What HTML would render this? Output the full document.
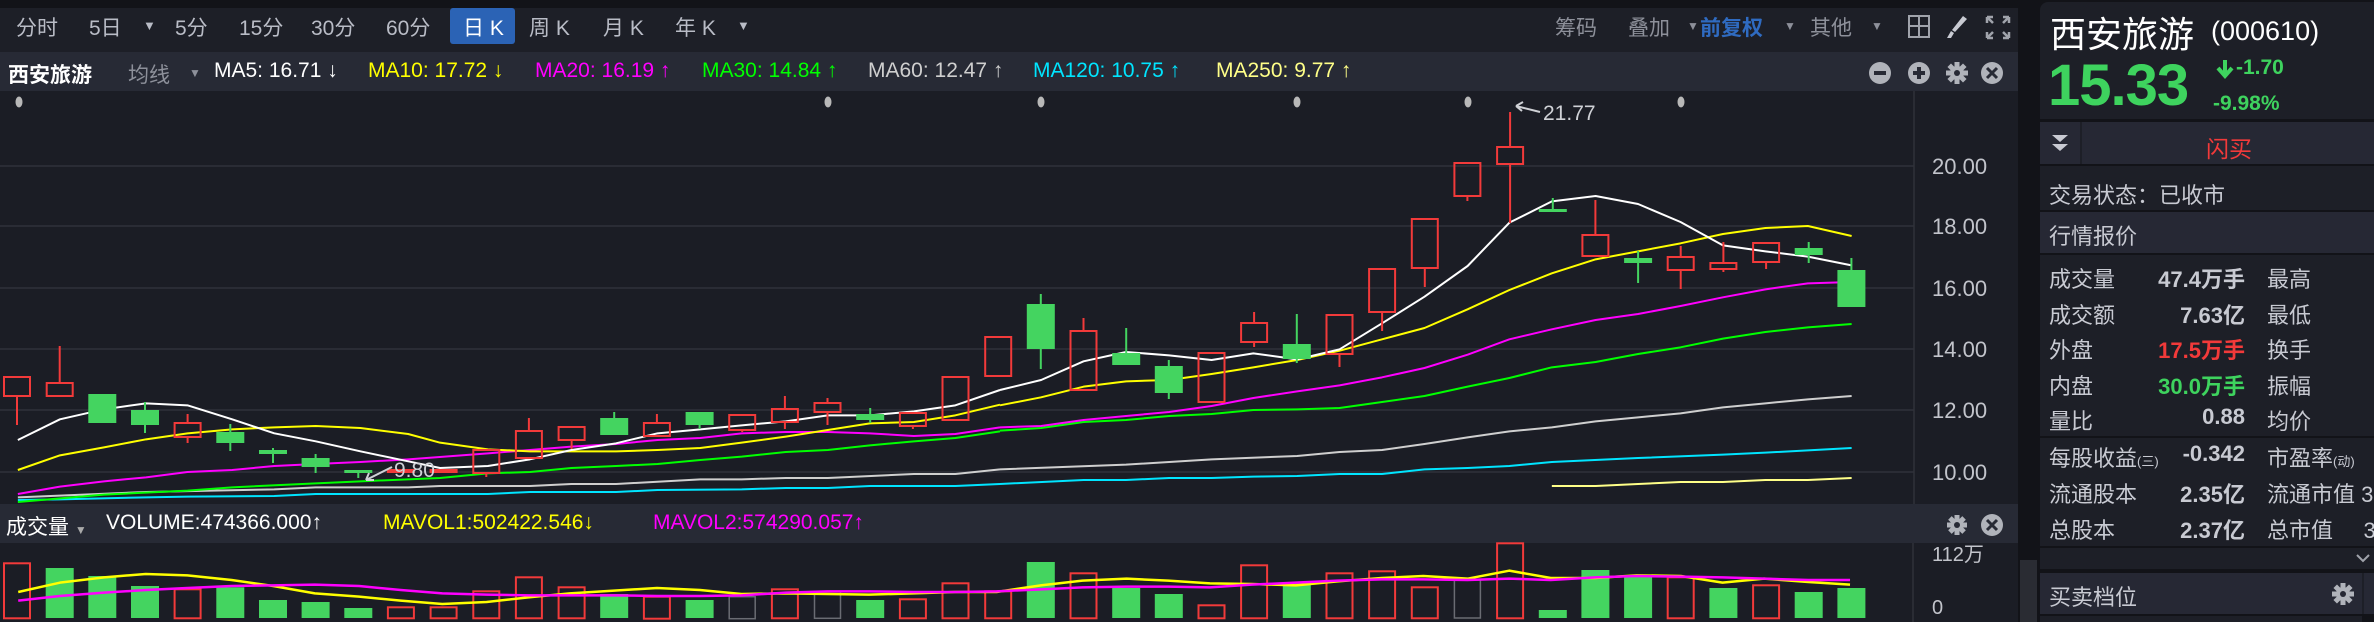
<!DOCTYPE html>
<html><head><meta charset="utf-8"><style>
*{margin:0;padding:0;box-sizing:border-box}
body{width:2374px;height:622px;background:#121318;overflow:hidden;position:relative;font-family:"Liberation Sans","Noto Sans CJK SC",sans-serif;}
.a{position:absolute;white-space:nowrap}
.tb{color:#b9bcc6;font-size:21px;top:12px}
.ma{font-size:21px;top:59px}
.rp{color:#c8cad2;font-size:22px}
.v{font-weight:bold;text-align:right;width:140px}
</style></head><body>
<!-- left main area -->
<div class="a" style="left:0;top:8px;width:2018px;height:44px;background:#1d1f27"></div>
<div class="a" style="left:0;top:52px;width:2018px;height:39px;background:#272a35"></div>
<div class="a" style="left:0;top:91px;width:2018px;height:413px;background:#1b1d25"></div>
<div class="a" style="left:0;top:504px;width:2018px;height:39px;background:#272a35"></div>
<div class="a" style="left:0;top:543px;width:2018px;height:79px;background:#1b1d25"></div>
<div class="a" style="left:2020px;top:560px;width:17px;height:62px;background:#2a2c33"></div>

<!-- toolbar -->
<div class="a tb" style="left:16px">分时</div>
<div class="a tb" style="left:89px">5日</div>
<div class="a tb" style="left:143px;font-size:13px;top:18px">▼</div>
<div class="a tb" style="left:175px">5分</div>
<div class="a tb" style="left:239px">15分</div>
<div class="a tb" style="left:311px">30分</div>
<div class="a tb" style="left:386px">60分</div>
<div class="a" style="left:450px;top:8px;width:65px;height:36px;background:#2b63b5;border-radius:3px"></div>
<div class="a tb" style="left:463px;color:#fff">日 K</div>
<div class="a tb" style="left:529px">周 K</div>
<div class="a tb" style="left:603px">月 K</div>
<div class="a tb" style="left:675px">年 K</div>
<div class="a tb" style="left:737px;font-size:13px;top:18px">▼</div>
<div class="a tb" style="left:1555px;color:#8d909a">筹码</div>
<div class="a tb" style="left:1628px;color:#8d909a">叠加</div>
<div class="a tb" style="left:1687px;font-size:12px;top:19px;color:#8d909a">▼</div>
<div class="a tb" style="left:1700px;color:#2f6bc1;font-weight:bold">前复权</div>
<div class="a tb" style="left:1784px;font-size:12px;top:19px;color:#8d909a">▼</div>
<div class="a tb" style="left:1810px;color:#8d909a">其他</div>
<div class="a tb" style="left:1871px;font-size:12px;top:19px;color:#8d909a">▼</div>
<svg class="a" style="left:1905px;top:14px" width="110" height="26">
<rect x="4" y="2" width="20" height="21" fill="none" stroke="#a0a3ab" stroke-width="2"/><line x1="14" y1="2" x2="14" y2="23" stroke="#a0a3ab" stroke-width="2"/><line x1="4" y1="12" x2="24" y2="12" stroke="#a0a3ab" stroke-width="2"/>
<path d="M58 2 L62 5 L50 18 L47 16 Z M46 17 L49 19 L46 24 L42 24 Z" fill="#c8cad2"/>
<path d="M82 3 h6 M82 3 v6 M82 3 l6 6 M104 3 h-6 M104 3 v6 M104 3 l-6 6 M82 24 h6 M82 24 v-6 M82 24 l6 -6 M104 24 h-6 M104 24 v-6 M104 24 l-6 -6" stroke="#a0a3ab" stroke-width="2.5" fill="none"/>
</svg>

<!-- MA row -->
<div class="a ma" style="left:8px;color:#fff;font-weight:bold">西安旅游</div>
<div class="a ma" style="left:128px;color:#8d909a">均线</div>
<div class="a ma" style="left:189px;font-size:12px;top:66px;color:#8d909a">▼</div>
<div class="a ma" style="left:214px;color:#fff">MA5: 16.71 ↓</div>
<div class="a ma" style="left:368px;color:#ffff00">MA10: 17.72 ↓</div>
<div class="a ma" style="left:535px;color:#ff00ff">MA20: 16.19 ↑</div>
<div class="a ma" style="left:702px;color:#00ff00">MA30: 14.84 ↑</div>
<div class="a ma" style="left:868px;color:#cfcfcf">MA60: 12.47 ↑</div>
<div class="a ma" style="left:1033px;color:#00e5ff">MA120: 10.75 ↑</div>
<div class="a ma" style="left:1216px;color:#ffff88">MA250: 9.77 ↑</div>
<svg class="a" style="left:1868px;top:60px" width="145" height="26">
<circle cx="12" cy="13" r="11" fill="#b0b3ba"/><rect x="6" y="11" width="12" height="4" fill="#272a35"/>
<circle cx="51" cy="13" r="11" fill="#b0b3ba"/><rect x="45" y="11" width="12" height="4" fill="#272a35"/><rect x="49" y="7" width="4" height="12" fill="#272a35"/>
<g transform="translate(89,13)"><circle r="7" fill="#b0b3ba"/><circle r="3" fill="#272a35"/><g fill="#b0b3ba"><rect x="-2.5" y="-11" width="5" height="22"/><rect x="-11" y="-2.5" width="22" height="5"/><rect x="-2.5" y="-11" width="5" height="22" transform="rotate(45)"/><rect x="-2.5" y="-11" width="5" height="22" transform="rotate(-45)"/></g><circle r="3" fill="#272a35"/></g>
<circle cx="124" cy="13" r="11" fill="#b0b3ba"/><path d="M119 8 L129 18 M129 8 L119 18" stroke="#272a35" stroke-width="3"/>
</svg>

<!-- chart -->
<svg class="a" style="left:0;top:0" width="2018" height="622">
<g stroke="#2a2c35" stroke-width="2">
<line x1="0" y1="166" x2="1914" y2="166"/><line x1="0" y1="226" x2="1914" y2="226"/><line x1="0" y1="288" x2="1914" y2="288"/><line x1="0" y1="349" x2="1914" y2="349"/><line x1="0" y1="410" x2="1914" y2="410"/><line x1="0" y1="472" x2="1914" y2="472"/>
</g>
<line x1="1914" y1="91" x2="1914" y2="504" stroke="#2f313a" stroke-width="1.5"/>
<line x1="1913" y1="543" x2="1913" y2="622" stroke="#2f313a" stroke-width="1.5"/>
<g fill="#b8b8b8"><ellipse cx="19" cy="102" rx="3.5" ry="5.5"/><ellipse cx="828" cy="102" rx="3.5" ry="5.5"/><ellipse cx="1041" cy="102" rx="3.5" ry="5.5"/><ellipse cx="1297" cy="102" rx="3.5" ry="5.5"/><ellipse cx="1468" cy="102" rx="3.5" ry="5.5"/><ellipse cx="1681" cy="102" rx="3.5" ry="5.5"/></g>
<g fill="#c2c4cb" font-size="22" font-family="Liberation Sans,sans-serif"><text x="1932" y="174">20.00</text><text x="1932" y="234">18.00</text><text x="1932" y="296">16.00</text><text x="1932" y="357">14.00</text><text x="1932" y="418">12.00</text><text x="1932" y="480">10.00</text></g>

<!-- MA lines -->
<g fill="none" stroke-width="2" stroke-linejoin="round">
<g transform="translate(0,90) scale(0.63776,0.33333)">
<polyline vector-effect="non-scaling-stroke" stroke="#00e5ff" points="28,1230 94,1228 229,1222 294,1220 430,1218 495,1212 765,1212 831,1206 966,1206 1031,1200 1163,1198 1232,1194 1298,1194 1364,1188 1498,1188 1568,1182"/>
<polyline vector-effect="non-scaling-stroke" stroke="#cfcfcf" points="28,1222 229,1206 430,1198 495,1192 640,1192 690,1188 831,1188 896,1182 966,1182 1098,1168 1163,1168 1232,1164 1298,1164 1433,1152 1498,1152 1568,1138"/>
<polyline vector-effect="non-scaling-stroke" stroke="#00ff00" points="28,1236 163,1214 294,1202 364,1192 495,1180 565,1174 690,1164 765,1150 831,1146 896,1134 966,1128 1031,1122 1098,1110 1163,1100 1232,1086 1298,1080 1364,1066 1433,1054 1498,1044 1568,1024"/>
<polyline vector-effect="non-scaling-stroke" stroke="#ff00ff" points="28,1212 94,1190 163,1174 229,1162 294,1146 364,1140 430,1128 495,1122 565,1116 640,1108 765,1090 831,1080 896,1070 966,1062 1031,1050 1098,1044 1163,1030 1232,1026 1298,1026 1364,1030 1433,1038 1498,1032 1568,1012"/>
<polyline vector-effect="non-scaling-stroke" stroke="#ffff00" points="28,1140 94,1096 163,1072 229,1048 294,1030 364,1018 430,1012 495,1008 565,1014 640,1032 690,1058 765,1078 831,1084 896,1084 966,1084 1031,1080 1098,1074 1163,1058 1232,1040 1298,1020 1364,1000 1433,996 1498,976 1568,944"/>
<polyline vector-effect="non-scaling-stroke" stroke="#ffffff" points="28,1050 94,988 163,958 229,940 294,946 364,988 430,1030 495,1054 565,1084 640,1114 690,1134 765,1128 831,1108 896,1080 966,1060 1031,1030 1098,1018 1163,1006 1232,994 1298,976 1364,976 1433,964 1498,946 1568,900"/>
</g>
<g transform="translate(1000,90) scale(0.66327,0.33333)">
<polyline vector-effect="non-scaling-stroke" stroke="#ffff88" points="832,1188 898,1188 962,1182 1026,1176 1090,1176 1154,1170 1218,1170 1284,1164"/>
<polyline vector-effect="non-scaling-stroke" stroke="#00e5ff" points="0,1182 126,1170 190,1170 255,1164 319,1164 382,1160 448,1158 512,1152 576,1152 640,1138 705,1134 768,1128 832,1116 962,1104 1090,1094 1154,1088 1284,1074"/>
<polyline vector-effect="non-scaling-stroke" stroke="#cfcfcf" points="0,1138 190,1124 319,1108 448,1098 512,1086 576,1080 640,1062 705,1042 768,1024 832,1012 898,994 962,982 1026,970 1090,952 1154,940 1218,928 1284,918"/>
<polyline vector-effect="non-scaling-stroke" stroke="#00ff00" points="0,1022 62,1014 126,996 190,990 255,978 319,972 382,960 448,958 512,954 576,936 640,918 705,890 768,864 832,832 898,816 962,792 1026,772 1090,746 1154,726 1218,712 1284,702"/>
<polyline vector-effect="non-scaling-stroke" stroke="#ff00ff" points="0,1012 62,1008 126,990 190,978 255,966 319,948 382,924 448,904 512,886 576,862 640,834 705,794 768,748 832,718 898,690 962,672 1026,648 1090,622 1154,598 1218,580 1284,576"/>
<polyline vector-effect="non-scaling-stroke" stroke="#ffff00" points="0,946 62,922 126,890 190,874 255,870 319,852 382,832 448,810 512,782 576,748 640,714 705,658 768,600 832,550 898,508 962,484 1026,460 1090,432 1154,414 1218,408 1284,438"/>
<polyline vector-effect="non-scaling-stroke" stroke="#ffffff" points="0,900 62,870 126,814 190,786 255,796 319,810 382,790 448,808 512,778 576,700 640,620 705,528 768,398 832,334 898,318 962,342 1026,396 1090,466 1154,484 1218,500 1284,526"/>
</g>
</g>

<!-- candles -->
<g stroke="#f23a3a" stroke-width="2" fill="none">
<rect x="4" y="377" width="26" height="19"/><line x1="17" y1="396" x2="17" y2="425"/>
<rect x="46.7" y="383" width="26" height="13"/><line x1="59.7" y1="346" x2="59.7" y2="383"/>
<rect x="174.6" y="423" width="26" height="14"/><line x1="187.6" y1="414" x2="187.6" y2="423"/><line x1="187.6" y1="437" x2="187.6" y2="443"/>
<rect x="473.3" y="450" width="26" height="23"/><line x1="486.3" y1="473" x2="486.3" y2="477"/>
<rect x="515.9" y="431" width="26" height="27"/><line x1="528.9" y1="418" x2="528.9" y2="431"/>
<rect x="558.6" y="427" width="26" height="13"/><line x1="571.6" y1="440" x2="571.6" y2="449"/>
<rect x="643.9" y="423" width="26" height="13"/><line x1="656.9" y1="414" x2="656.9" y2="423"/>
<rect x="729.2" y="415" width="26" height="15"/><line x1="742.2" y1="430" x2="742.2" y2="432"/>
<rect x="771.9" y="409" width="26" height="13"/><line x1="784.9" y1="396" x2="784.9" y2="409"/><line x1="784.9" y1="422" x2="784.9" y2="429"/>
<rect x="814.5" y="403" width="26" height="9"/><line x1="827.5" y1="398" x2="827.5" y2="403"/><line x1="827.5" y1="412" x2="827.5" y2="425"/>
<rect x="899.9" y="413" width="26" height="13"/><line x1="912.9" y1="426" x2="912.9" y2="429"/>
<rect x="942.5" y="377" width="26" height="43"/>
<rect x="985.2" y="337" width="26" height="39"/>
<rect x="1070.5" y="331" width="26" height="59"/><line x1="1083.5" y1="318" x2="1083.5" y2="331"/>
<rect x="1198.5" y="353" width="26" height="49"/>
<rect x="1241.1" y="323" width="26" height="19"/><line x1="1254.1" y1="312" x2="1254.1" y2="323"/><line x1="1254.1" y1="342" x2="1254.1" y2="347"/>
<rect x="1326.5" y="315" width="26" height="39"/><line x1="1339.5" y1="354" x2="1339.5" y2="367"/>
<rect x="1369.1" y="269" width="26" height="43"/><line x1="1382.1" y1="312" x2="1382.1" y2="331"/>
<rect x="1411.8" y="219" width="26" height="49"/><line x1="1424.8" y1="268" x2="1424.8" y2="287"/>
<rect x="1454.4" y="163" width="26" height="33"/><line x1="1467.4" y1="196" x2="1467.4" y2="201"/>
<rect x="1497.1" y="147" width="26" height="17"/><line x1="1510.1" y1="112" x2="1510.1" y2="147"/><line x1="1510.1" y1="164" x2="1510.1" y2="223"/>
<rect x="1582.4" y="235" width="26" height="21"/><line x1="1595.4" y1="200" x2="1595.4" y2="235"/>
<rect x="1667.7" y="257" width="26" height="13"/><line x1="1680.7" y1="246" x2="1680.7" y2="257"/><line x1="1680.7" y1="270" x2="1680.7" y2="289"/>
<rect x="1710.4" y="263" width="26" height="6"/><line x1="1723.4" y1="242" x2="1723.4" y2="263"/><line x1="1723.4" y1="269" x2="1723.4" y2="272"/>
<rect x="1753.1" y="243" width="26" height="19"/><line x1="1766.1" y1="262" x2="1766.1" y2="269"/>
</g>
<g fill="#f23a3a"><rect x="386.9" y="469" width="28" height="4"/><rect x="429.6" y="469" width="28" height="4"/></g>
<g stroke="#44d460" stroke-width="2"><line x1="145" y1="402" x2="145" y2="433"/><line x1="230.3" y1="424" x2="230.3" y2="451"/><line x1="273" y1="448" x2="273" y2="463"/><line x1="315.6" y1="454" x2="315.6" y2="473"/><line x1="358.3" y1="470" x2="358.3" y2="478"/><line x1="614.2" y1="412" x2="614.2" y2="435"/><line x1="699.6" y1="412" x2="699.6" y2="429"/><line x1="870.2" y1="408" x2="870.2" y2="423"/><line x1="1040.8" y1="294" x2="1040.8" y2="369"/><line x1="1126.2" y1="328" x2="1126.2" y2="365"/><line x1="1168.8" y1="360" x2="1168.8" y2="399"/><line x1="1296.8" y1="314" x2="1296.8" y2="363"/><line x1="1552.8" y1="198" x2="1552.8" y2="211"/><line x1="1638.1" y1="251" x2="1638.1" y2="283"/><line x1="1808.7" y1="242" x2="1808.7" y2="263"/><line x1="1851.4" y1="258" x2="1851.4" y2="270"/></g>
<g fill="#44d460"><rect x="88.3" y="394" width="28" height="29"/><rect x="131" y="410" width="28" height="15"/><rect x="216.3" y="432" width="28" height="11"/><rect x="259" y="450" width="28" height="4"/><rect x="301.6" y="458" width="28" height="9"/><rect x="344.3" y="470" width="28" height="3"/><rect x="600.2" y="418" width="28" height="17"/><rect x="685.6" y="412" width="28" height="13"/><rect x="856.2" y="414" width="28" height="6"/><rect x="1026.8" y="304" width="28" height="45"/><rect x="1112.2" y="353" width="28" height="12"/><rect x="1154.8" y="366" width="28" height="27"/><rect x="1282.8" y="344" width="28" height="15"/><rect x="1538.8" y="209" width="28" height="3"/><rect x="1624.1" y="258" width="28" height="5"/><rect x="1794.7" y="248" width="28" height="7"/><rect x="1837.4" y="270" width="28" height="37"/></g>
<g fill="#cfd1d6" font-size="21" font-family="Liberation Sans,sans-serif"><text x="1543" y="120">21.77</text><text x="394" y="477">9.80</text></g>
<path d="M1540 112 L1516 106 M1516 106 l7 -4 M1516 106 l6 5" stroke="#cfd1d6" stroke-width="2" fill="none"/>
<path d="M392 467 L366 480 M366 480 l8 0 M366 480 l3 -7" stroke="#cfd1d6" stroke-width="2" fill="none"/>

<!-- volume -->
<g fill="#c2c4cb" font-size="20" font-family="Liberation Sans,'Noto Sans CJK SC',sans-serif"><text x="1932" y="561">112万</text><text x="1932" y="614">0</text></g>
<g fill="#44d460">
<rect x="45.7" y="568" width="28" height="50"/><rect x="88.3" y="576" width="28" height="42"/><rect x="131" y="586" width="28" height="32"/><rect x="216.3" y="587.3" width="28" height="30.7"/><rect x="259" y="600" width="28" height="18"/><rect x="301.6" y="602" width="28" height="16"/><rect x="344.3" y="608" width="28" height="10"/><rect x="600.2" y="594" width="28" height="24"/><rect x="685.6" y="600" width="28" height="18"/><rect x="856.2" y="600" width="28" height="18"/><rect x="1026.8" y="562" width="28" height="56"/><rect x="1112.2" y="588" width="28" height="30"/><rect x="1154.8" y="594" width="28" height="24"/><rect x="1282.8" y="582" width="28" height="36"/><rect x="1538.8" y="610" width="28" height="8"/><rect x="1581.4" y="570" width="28" height="48"/><rect x="1624.1" y="576" width="28" height="42"/><rect x="1709.4" y="588" width="28" height="30"/><rect x="1794.7" y="592" width="28" height="26"/><rect x="1837.4" y="588" width="28" height="30"/>
</g>
<g fill="none" stroke="#f23a3a" stroke-width="2">
<rect x="4" y="563.3" width="26" height="55"/><rect x="174.6" y="589.3" width="26" height="29"/><rect x="387.9" y="607.3" width="26" height="11"/><rect x="430.6" y="607.3" width="26" height="11"/><rect x="473.3" y="591.3" width="26" height="27"/><rect x="515.9" y="577.3" width="26" height="41"/><rect x="558.6" y="587.3" width="26" height="31"/><rect x="643.9" y="596.7" width="26" height="22"/><rect x="771.9" y="589.3" width="26" height="29"/><rect x="899.9" y="599.3" width="26" height="19"/><rect x="942.5" y="583.3" width="26" height="35"/><rect x="985.2" y="591.3" width="26" height="27"/><rect x="1070.5" y="573.3" width="26" height="45"/><rect x="1198.5" y="605.3" width="26" height="13"/><rect x="1241.1" y="565.3" width="26" height="53"/><rect x="1326.5" y="573.3" width="26" height="45"/><rect x="1369.1" y="571.3" width="26" height="47"/><rect x="1411.8" y="587.3" width="26" height="31"/><rect x="1497.1" y="543.3" width="26" height="75"/><rect x="1667.7" y="577.3" width="26" height="41"/><rect x="1753.1" y="585.3" width="26" height="33"/>
</g>
<g fill="none" stroke="#6a6c73" stroke-width="1.5"><rect x="729.2" y="596.7" width="26" height="22"/><rect x="814.5" y="591.3" width="26" height="27"/><rect x="1454.4" y="580" width="26" height="38"/></g>
<g fill="none" stroke-width="2.5" stroke-linejoin="round" transform="translate(0,500) scale(1.301,0.33333)">
<polyline vector-effect="non-scaling-stroke" stroke="#ffff00" points="14,276 46,248 80,232 112,222 144,226 178,240 210,258 242,280 276,290 308,302 340,312 374,306 406,292 438,280 472,272 505,264 538,270 570,282 604,280 636,282 668,284 702,280 734,276 766,276 800,256 832,242 866,236 898,242 930,250 962,252 996,256 1028,244 1062,234 1094,228 1128,236 1160,212 1192,234 1226,234 1258,226 1292,228 1324,248 1356,236 1390,246 1422,254"/>
<polyline vector-effect="non-scaling-stroke" stroke="#ff00ff" points="14,302 46,288 80,278 112,270 144,264 178,258 210,256 242,254 276,258 308,270 340,280 374,284 406,286 438,286 472,286 505,288 538,288 570,286 604,278 636,274 668,274 702,276 734,276 766,274 800,268 832,262 866,260 898,260 930,262 962,254 996,248 1028,242 1062,238 1094,238 1128,240 1160,236 1192,240 1226,232 1258,228 1292,230 1324,232 1356,236 1390,240 1422,240"/>
</g>
</svg>
<div class="a" style="left:6px;top:511px;font-size:21px;color:#fff">成交量 <span style="font-size:12px;color:#aaa">▼</span></div>
<div class="a" style="left:106px;top:511px;font-size:21px;color:#fff">VOLUME:474366.000↑</div>
<div class="a" style="left:383px;top:511px;font-size:21px;color:#ffff00">MAVOL1:502422.546↓</div>
<div class="a" style="left:653px;top:511px;font-size:21px;color:#ff00ff">MAVOL2:574290.057↑</div>
<svg class="a" style="left:1945px;top:512px" width="70" height="26">
<g transform="translate(12,13)"><circle r="6" fill="#b0b3ba"/><g fill="#b0b3ba"><rect x="-2.5" y="-10" width="5" height="20"/><rect x="-10" y="-2.5" width="20" height="5"/><rect x="-2.5" y="-10" width="5" height="20" transform="rotate(45)"/><rect x="-2.5" y="-10" width="5" height="20" transform="rotate(-45)"/></g><circle r="3" fill="#272a35"/></g>
<circle cx="47" cy="13" r="11" fill="#b0b3ba"/><path d="M42 8 L52 18 M52 8 L42 18" stroke="#272a35" stroke-width="3"/>
</svg>

<!-- right panel -->
<div class="a" style="left:2040px;top:2px;width:334px;height:620px;background:#1d1f27;border-radius:8px 0 0 0"></div>
<div class="a" style="left:2050px;top:6px;font-size:36px;color:#fff">西安旅游</div>
<div class="a" style="left:2211px;top:16px;font-size:27px;color:#fff">(000610)</div>
<div class="a" style="left:2048px;top:52px;font-size:58px;font-weight:bold;color:#3ed35e;letter-spacing:-1px">15.33</div>
<svg class="a" style="left:2215px;top:58px" width="20" height="22"><path d="M10 2 V16 M3 10 L10 18 L17 10" stroke="#3ed35e" stroke-width="4" fill="none"/></svg>
<div class="a" style="left:2236px;top:56px;font-size:21px;font-weight:bold;color:#3ed35e">-1.70</div>
<div class="a" style="left:2213px;top:92px;font-size:21px;font-weight:bold;color:#3ed35e">-9.98%</div>
<div class="a" style="left:2040px;top:119px;width:334px;height:3px;background:#121318"></div>
<div class="a" style="left:2040px;top:122px;width:40px;height:42px;background:#262834"></div>
<div class="a" style="left:2082px;top:122px;width:292px;height:42px;background:#262834"></div>
<svg class="a" style="left:2050px;top:133px" width="20" height="20"><path d="M2 2 H18 L10 9 Z M2 11 H18 L10 18 Z" fill="#c8cad2"/></svg>
<div class="a" style="left:2206px;top:130px;font-size:23px;color:#f23a3a">闪买</div>
<div class="a" style="left:2040px;top:164px;width:334px;height:2px;background:#121318"></div>
<div class="a rp" style="left:2049px;top:178px">交易状态：已收市</div>
<div class="a" style="left:2040px;top:210px;width:334px;height:2px;background:#121318"></div>
<div class="a" style="left:2040px;top:212px;width:334px;height:41px;background:#262834"></div>
<div class="a rp" style="left:2049px;top:219px">行情报价</div>
<div class="a" style="left:2040px;top:253px;width:334px;height:2px;background:#121318"></div>

<div class="a rp" style="left:2049px;top:262px">成交量</div><div class="a rp v" style="left:2105px;top:262px">47.4万手</div><div class="a rp" style="left:2267px;top:262px">最高</div>
<div class="a rp" style="left:2049px;top:298px">成交额</div><div class="a rp v" style="left:2105px;top:298px">7.63亿</div><div class="a rp" style="left:2267px;top:298px">最低</div>
<div class="a rp" style="left:2049px;top:333px">外盘</div><div class="a rp v" style="left:2105px;top:333px;color:#f23a3a">17.5万手</div><div class="a rp" style="left:2267px;top:333px">换手</div>
<div class="a rp" style="left:2049px;top:369px">内盘</div><div class="a rp v" style="left:2105px;top:369px;color:#3ed35e">30.0万手</div><div class="a rp" style="left:2267px;top:369px">振幅</div>
<div class="a rp" style="left:2049px;top:404px">量比</div><div class="a rp v" style="left:2105px;top:404px">0.88</div><div class="a rp" style="left:2267px;top:404px">均价</div>
<div class="a" style="left:2040px;top:436px;width:334px;height:2px;background:#121318"></div>
<div class="a rp" style="left:2049px;top:441px">每股收益<span style="font-size:13px">(三)</span></div><div class="a rp v" style="left:2105px;top:441px">-0.342</div><div class="a rp" style="left:2267px;top:441px">市盈率<span style="font-size:13px">(动)</span></div>
<div class="a rp" style="left:2049px;top:477px">流通股本</div><div class="a rp v" style="left:2105px;top:477px">2.35亿</div><div class="a rp" style="left:2267px;top:477px">流通市值 3</div>
<div class="a rp" style="left:2049px;top:513px">总股本</div><div class="a rp v" style="left:2105px;top:513px">2.37亿</div><div class="a rp" style="left:2267px;top:513px">总市值&nbsp;&nbsp;&nbsp;&nbsp;&nbsp;3</div>
<div class="a" style="left:2040px;top:546px;width:334px;height:2px;background:#121318"></div>
<svg class="a" style="left:2355px;top:552px" width="16" height="12"><path d="M2 3 L8 9 L14 3" stroke="#a0a3ab" stroke-width="2" fill="none"/></svg>
<div class="a" style="left:2040px;top:569px;width:334px;height:4px;background:#121318"></div>
<div class="a" style="left:2040px;top:573px;width:322px;height:41px;background:#262834"></div>
<div class="a" style="left:2364px;top:573px;width:10px;height:41px;background:#262834"></div>
<div class="a rp" style="left:2049px;top:580px">买卖档位</div>
<svg class="a" style="left:2330px;top:581px" width="26" height="26"><g transform="translate(13,13)"><circle r="7" fill="#b0b3ba"/><g fill="#b0b3ba"><rect x="-2.5" y="-11" width="5" height="22"/><rect x="-11" y="-2.5" width="22" height="5"/><rect x="-2.5" y="-11" width="5" height="22" transform="rotate(45)"/><rect x="-2.5" y="-11" width="5" height="22" transform="rotate(-45)"/></g><circle r="3" fill="#262834"/></g></svg>
<div class="a" style="left:2040px;top:614px;width:334px;height:8px;background:#121318"></div>
<div class="a" style="left:2040px;top:616px;width:322px;height:6px;background:#1d1f27"></div>
</body></html>
